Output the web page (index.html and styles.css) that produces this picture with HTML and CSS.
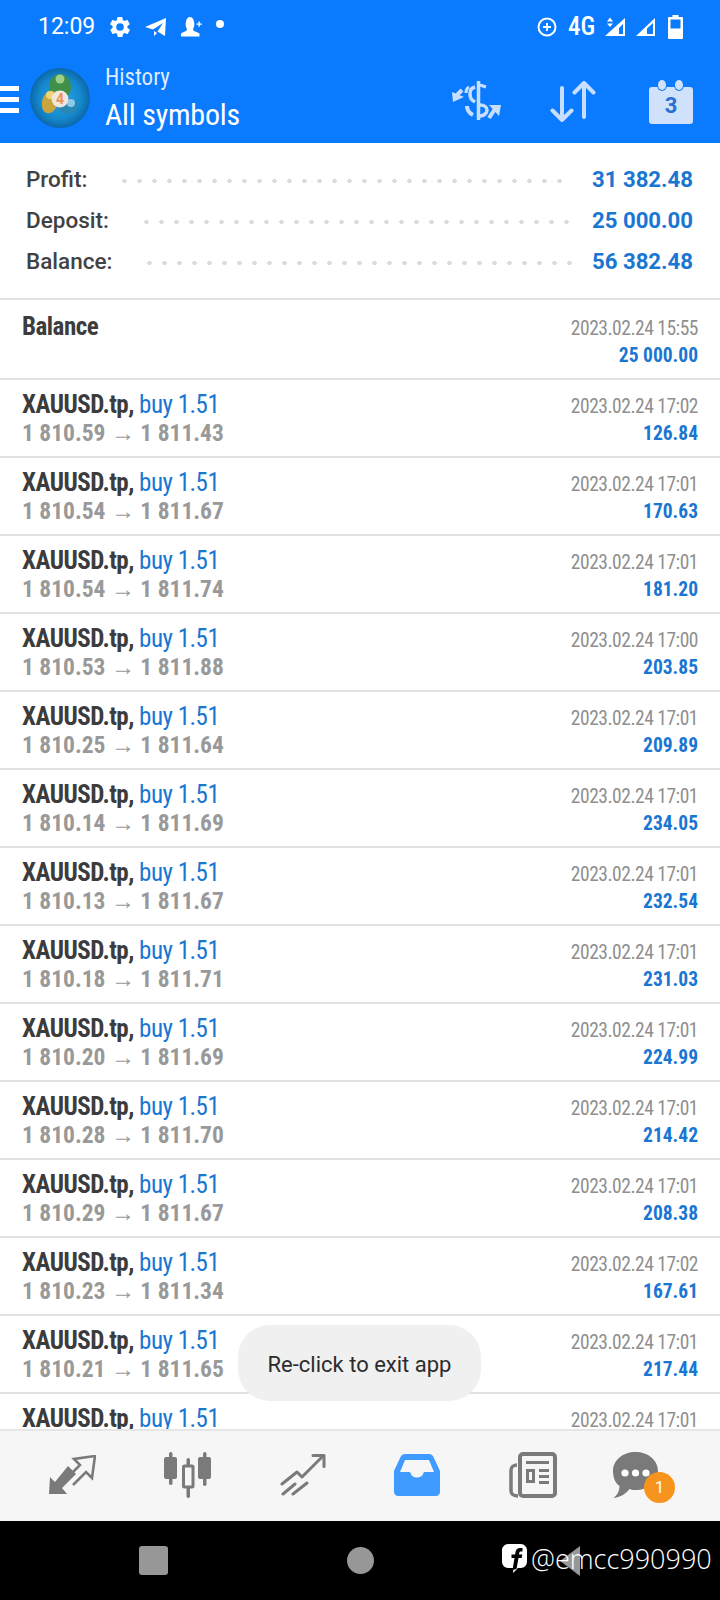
FILE: index.html
```html
<!DOCTYPE html>
<html lang="en">
<head>
    <meta charset="UTF-8">
    <meta name="viewport" content="width=device-width, initial-scale=1.0">
    <title>History</title>
    <link rel="stylesheet" href="styles.css">
</head>
<body>
    <div class="screen">
        <!-- Blue header with Android status bar -->
        <header class="header">
            <div class="status">
                <div class="status-left">
                    <span class="clock">12:09</span>
                    <svg class="st-gear" width="24" height="24" viewBox="0 0 24 24"><path fill="#fff" d="M19.4 13c.1-.3.1-.7.1-1s0-.7-.1-1l2.1-1.600c.2-.2.2-.4.1-.6l-2-3.500c-.1-.2-.4-.3-.6-.2l-2.500 1c-.5-.4-1.100-.7-1.700-1l-.4-2.700c0-.2-.2-.4-.5-.4h-4c-.2 0-.4.2-.5.400l-.4 2.700c-.6.2-1.100.6-1.700 1l-2.500-1c-.2-.1-.5 0-.6.2l-2 3.500c-.1.2-.1.5.1.6L4.600 11c0 .3-.1.7-.1 1s0 .7.1 1l-2.100 1.600c-.2.2-.2.4-.1.6l2 3.500c.1.2.4.3.6.2l2.500-1c.5.4 1.100.7 1.700 1l.4 2.700c0 .2.200.4.500.4h4c.2 0 .4-.2.500-.4l.4-2.700c.6-.2 1.100-.6 1.700-1l2.500 1c.2.1.5 0 .6-.2l2-3.500c.1-.2.1-.5-.1-.6zM12 15.800a3.800 3.800 0 1 1 0-7.600 3.800 3.800 0 0 1 0 7.600z"/></svg>
                    <svg class="st-plane" width="22" height="20" viewBox="0 0 22 20"><path fill="#fff" d="M0 10 21 1 20 19 12.500 14.500 18 6 8 12.500z"/><path fill="#fff" d="M9 14l3 2-3 3z"/></svg>
                    <svg class="st-person" width="21" height="21" viewBox="0 0 21 21"><path fill="#fff" d="M0 20.500v-2.500c0-1.500 4-2 5.500-3.500.5-.5.5-1.500 0-2.500C4.500 10.500 4.500 7.500 5 5.500 5.500 2.500 7 1 9 1s3.500 1.500 4 4.500c.5 2 .5 5-.5 6.500-.5 1-.5 2 0 2.500 1.500 1.500 6 2 6 3.500v2.500z"/><path fill="#fff" d="M15.500 7.500h2v-2h1.300v2h2v1.300h-2v2h-1.300v-2h-2z"/></svg>
                    <span class="st-dot"></span>
                </div>
                <div class="status-right">
                    <svg width="20" height="20" viewBox="0 0 20 20" fill="none" stroke="#fff"><circle cx="10" cy="10" r="8.500" stroke-width="2"/><path stroke-width="1.800" d="M6 10h8M10 6v8"/></svg>
                    <span class="net">4G</span>
                    <svg class="sig-a" width="22" height="19" viewBox="0 0 22 19"><path fill="#fff" d="M3 4.500 6 .5l3 4zM3 6.500h6l-3 3.500z"/><path fill="#fff" d="M1 19 21 1v18z"/><path fill="#0a7bff" d="M19 7 15 11v6h4z"/></svg>
                    <svg class="sig-b" width="19" height="19" viewBox="0 0 19 19"><path fill="#fff" d="M0 19 19 1v18z"/><path fill="#0a7bff" d="M17 6 11 11.500V17h6z"/><path fill="#fff" d="M5 17l6-5.500V17z"/></svg>
                    <svg class="batt" width="15" height="24" viewBox="0 0 15 24"><path fill="#fff" d="M4.500 0h6v2h3.500c.5 0 1 .5 1 1v20c0 .5-.5 1-1 1H1c-.5 0-1-.5-1-1V3c0-.5.5-1 1-1h3.500z"/><path fill="#0a7bff" d="M2.500 4.500h10v9h-10z"/></svg>
                </div>
            </div>
            <div class="toolbar">
                <div class="burger"><span></span><span></span><span></span></div>
                <svg class="logo" width="60" height="60" viewBox="0 0 60 60">
                    <defs>
                        <radialGradient id="logoBg" cx="50%" cy="50%" r="50%"><stop offset="0" stop-color="#2ba6e6"/><stop offset=".7" stop-color="#1488cc"/><stop offset="1" stop-color="#0c67a8"/></radialGradient>
                    </defs>
                    <circle cx="30" cy="30" r="30" fill="url(#logoBg)"/>
                    <ellipse cx="30" cy="19" rx="11" ry="13" fill="#3f8f4a"/>
                    <circle cx="30" cy="11" r="4.500" fill="#9ccf8a"/>
                    <ellipse cx="20" cy="34" rx="8" ry="11.500" transform="rotate(15 20 34)" fill="#c9a53f"/>
                    <circle cx="20" cy="27" r="4" fill="#f0d574"/>
                    <ellipse cx="38" cy="38" rx="10" ry="8" fill="#2a86b5"/>
                    <circle cx="41" cy="35" r="4" fill="#8ecbe6"/>
                    <circle cx="30" cy="31" r="8.500" fill="#f0e6dc"/>
                    <text class="logo-num" x="30" y="36">4</text>
                </svg>
                <div class="titles">
                    <div class="subtitle">History</div>
                    <div class="title">All symbols</div>
                </div>
                <div class="actions">
                    <svg class="act-money" width="50" height="40" viewBox="0 0 50 40" fill="none" stroke="#c8deff">
                        <path stroke-width="3.500" d="M26.500 0v39"/>
                        <path stroke-width="3" d="M28 4l6 2"/>
                        <path stroke-width="3.500" d="M23 6c-3 1-5 2-5 7s2 6 5 8"/>
                        <path stroke-width="3.500" d="M28 24c4 0 7 2 7 5s-3 6-7 6"/>
                        <path stroke-width="4" d="M15 25c0 4 2 7 6 9"/>
                        <path stroke-width="3" d="M17 6c-2 1-3 3-3 6"/>
                        <path fill="#c8deff" stroke="none" d="M0 11 12 16 1 21z"/>
                        <path stroke-width="4" d="M4 15 10 9"/>
                        <path fill="#c8deff" stroke="none" d="M37 24H49L47 35z"/>
                        <path stroke-width="4" d="M37 37 43 28"/>
                    </svg>
                    <svg class="act-sort" width="47" height="41" viewBox="0 0 47 41" fill="none" stroke="#c8deff" stroke-width="4" stroke-linecap="round" stroke-linejoin="round">
                        <path d="M12 7v32M2.500 29.500 12 39l9.500-9.500"/>
                        <path d="M34 36V2M24.500 11.500 34 2l9.500 9.500"/>
                    </svg>
                    <div class="cal">
                        <span class="cal-ring"></span>
                        <span class="cal-ring cal-ring2"></span>
                        <span class="cal-day">3</span>
                    </div>
                </div>
            </div>
        </header>

        <!-- Totals -->
        <section class="summary">
            <div class="sum-row"><span class="sum-label">Profit:</span><span class="leader"></span><span class="sum-val">31 382.48</span></div>
            <div class="sum-row"><span class="sum-label">Deposit:</span><span class="leader"></span><span class="sum-val">25 000.00</span></div>
            <div class="sum-row"><span class="sum-label">Balance:</span><span class="leader"></span><span class="sum-val">56 382.48</span></div>
        </section>

        <!-- Deals -->
        <main class="list">
            <div class="row row-balance">
                <div class="left"><div class="sym cond">Balance</div></div>
                <div class="right"><div class="date cond">2023.02.24 15:55</div><div class="amount cond">25 000.00</div></div>
            </div>
            <div class="row">
                <div class="left"><div class="cond"><span class="sym">XAUUSD.tp,</span> <span class="buy">buy 1.51</span></div><div class="price cond">1 810.59 <span class="arrow">→</span> 1 811.43</div></div>
                <div class="right"><div class="date cond">2023.02.24 17:02</div><div class="amount cond">126.84</div></div>
            </div>
            <div class="row">
                <div class="left"><div class="cond"><span class="sym">XAUUSD.tp,</span> <span class="buy">buy 1.51</span></div><div class="price cond">1 810.54 <span class="arrow">→</span> 1 811.67</div></div>
                <div class="right"><div class="date cond">2023.02.24 17:01</div><div class="amount cond">170.63</div></div>
            </div>
            <div class="row">
                <div class="left"><div class="cond"><span class="sym">XAUUSD.tp,</span> <span class="buy">buy 1.51</span></div><div class="price cond">1 810.54 <span class="arrow">→</span> 1 811.74</div></div>
                <div class="right"><div class="date cond">2023.02.24 17:01</div><div class="amount cond">181.20</div></div>
            </div>
            <div class="row">
                <div class="left"><div class="cond"><span class="sym">XAUUSD.tp,</span> <span class="buy">buy 1.51</span></div><div class="price cond">1 810.53 <span class="arrow">→</span> 1 811.88</div></div>
                <div class="right"><div class="date cond">2023.02.24 17:00</div><div class="amount cond">203.85</div></div>
            </div>
            <div class="row">
                <div class="left"><div class="cond"><span class="sym">XAUUSD.tp,</span> <span class="buy">buy 1.51</span></div><div class="price cond">1 810.25 <span class="arrow">→</span> 1 811.64</div></div>
                <div class="right"><div class="date cond">2023.02.24 17:01</div><div class="amount cond">209.89</div></div>
            </div>
            <div class="row">
                <div class="left"><div class="cond"><span class="sym">XAUUSD.tp,</span> <span class="buy">buy 1.51</span></div><div class="price cond">1 810.14 <span class="arrow">→</span> 1 811.69</div></div>
                <div class="right"><div class="date cond">2023.02.24 17:01</div><div class="amount cond">234.05</div></div>
            </div>
            <div class="row">
                <div class="left"><div class="cond"><span class="sym">XAUUSD.tp,</span> <span class="buy">buy 1.51</span></div><div class="price cond">1 810.13 <span class="arrow">→</span> 1 811.67</div></div>
                <div class="right"><div class="date cond">2023.02.24 17:01</div><div class="amount cond">232.54</div></div>
            </div>
            <div class="row">
                <div class="left"><div class="cond"><span class="sym">XAUUSD.tp,</span> <span class="buy">buy 1.51</span></div><div class="price cond">1 810.18 <span class="arrow">→</span> 1 811.71</div></div>
                <div class="right"><div class="date cond">2023.02.24 17:01</div><div class="amount cond">231.03</div></div>
            </div>
            <div class="row">
                <div class="left"><div class="cond"><span class="sym">XAUUSD.tp,</span> <span class="buy">buy 1.51</span></div><div class="price cond">1 810.20 <span class="arrow">→</span> 1 811.69</div></div>
                <div class="right"><div class="date cond">2023.02.24 17:01</div><div class="amount cond">224.99</div></div>
            </div>
            <div class="row">
                <div class="left"><div class="cond"><span class="sym">XAUUSD.tp,</span> <span class="buy">buy 1.51</span></div><div class="price cond">1 810.28 <span class="arrow">→</span> 1 811.70</div></div>
                <div class="right"><div class="date cond">2023.02.24 17:01</div><div class="amount cond">214.42</div></div>
            </div>
            <div class="row">
                <div class="left"><div class="cond"><span class="sym">XAUUSD.tp,</span> <span class="buy">buy 1.51</span></div><div class="price cond">1 810.29 <span class="arrow">→</span> 1 811.67</div></div>
                <div class="right"><div class="date cond">2023.02.24 17:01</div><div class="amount cond">208.38</div></div>
            </div>
            <div class="row">
                <div class="left"><div class="cond"><span class="sym">XAUUSD.tp,</span> <span class="buy">buy 1.51</span></div><div class="price cond">1 810.23 <span class="arrow">→</span> 1 811.34</div></div>
                <div class="right"><div class="date cond">2023.02.24 17:02</div><div class="amount cond">167.61</div></div>
            </div>
            <div class="row">
                <div class="left"><div class="cond"><span class="sym">XAUUSD.tp,</span> <span class="buy">buy 1.51</span></div><div class="price cond">1 810.21 <span class="arrow">→</span> 1 811.65</div></div>
                <div class="right"><div class="date cond">2023.02.24 17:01</div><div class="amount cond">217.44</div></div>
            </div>
            <div class="row">
                <div class="left"><div class="cond"><span class="sym">XAUUSD.tp,</span> <span class="buy">buy 1.51</span></div></div>
                <div class="right"><div class="date cond">2023.02.24 17:01</div></div>
            </div>
        </main>

        <!-- Toast sits over the list -->
        <div class="toast">Re-click to exit app</div>

        <!-- Tab bar -->
        <nav class="tabs">
            <svg class="tab" width="47" height="40" viewBox="0 0 47 40">
                <path fill="#7a7a7a" d="M0 39 1 22 6 27 19 11 27 19 13 33 18 39z"/>
                <path fill="none" stroke="#7a7a7a" stroke-width="2.600" d="M20 21 31 10 25 4 46 1 43 23 37 17 24 30"/>
            </svg>
            <svg class="tab" width="48" height="46" viewBox="0 0 48 46" fill="#7a7a7a">
                <rect x="5" y="0" width="3.500" height="33" rx="1.700"/>
                <rect x="39" y="0" width="3.500" height="34" rx="1.700"/>
                <rect x="22.500" y="6" width="3.500" height="40" rx="1.700"/>
                <rect x="0" y="5" width="13" height="22" rx="2"/>
                <rect x="34" y="5" width="13" height="22" rx="2"/>
                <rect x="19.500" y="14" width="9.500" height="21" rx="1" fill="#f6f6f6" stroke="#7a7a7a" stroke-width="3"/>
            </svg>
            <svg class="tab" width="46" height="42" viewBox="0 0 46 42" fill="none" stroke="#7a7a7a" stroke-width="3" stroke-linejoin="round" stroke-linecap="round">
                <path d="M2 30 17 18l5 5L43 2"/><path d="M33 1.500h11v11"/>
                <path d="M3 40 15 30M13 40 27 29"/>
            </svg>
            <svg class="tab" width="46" height="42" viewBox="0 0 46 42">
                <path fill="#3f9bff" d="M11 0h24c2 0 3.500 1 4.500 3L46 17v21c0 2-2 4-4 4H4c-2 0-4-2-4-4V17L6.500 3C7.500 1 9 0 11 0z"/>
                <path fill="#f6f6f6" d="M11 6h24l5 12H31c-1 0-1.500.5-2 2-.5 2-3.500 3.500-6 3.500s-5.500-1.500-6-3.500c-.5-1.500-1-2-2-2H6z"/>
            </svg>
            <svg class="tab tab-news" width="48" height="46" viewBox="0 0 48 46">
                <rect x="11" y="2" width="35" height="42" rx="3" fill="none" stroke="#7a7a7a" stroke-width="4"/>
                <path fill="none" stroke="#7a7a7a" stroke-width="3.500" d="M9 44c-4 0-7-2-7-5V18c0-3 3-5 6-5"/>
                <path fill="#7a7a7a" d="M17 9h23v3H17zM17 17h9v14h-9zM30 17h10v3H30zM30 23h10v3H30zM30 29h10v3H30z"/>
                <path fill="#f6f6f6" d="M20 20h3v8h-3z"/>
            </svg>
            <div class="chat">
                <svg width="45" height="46" viewBox="0 0 45 46">
                    <path fill="#7a7a7a" d="M22.500 0C35 0 45 8 45 19S35 38 22.500 38c-2 0-4 0-6-1-3 4-8 8-16 9 4-3 6-7 6-12C2 31 0 25 0 19 0 8 10 0 22.500 0z"/>
                    <circle cx="12" cy="21" r="3.600" fill="#fff"/><circle cx="22.500" cy="21" r="3.600" fill="#fff"/><circle cx="33" cy="21" r="3.600" fill="#fff"/>
                </svg>
                <span class="badge">1</span>
            </div>
        </nav>

        <!-- Android nav bar -->
        <footer class="navbar">
            <span class="nav-square"></span>
            <span class="nav-circle"></span>
            <div class="nav-back"></div>
            <div class="watermark">
                <svg width="25" height="29" viewBox="0 0 25 29"><path fill="#fff" d="M6 0h13c3 0 6 3 6 6v12c0 3-3 6-6 6h-3l-5 5 .5-5H6c-3 0-6-3-6-6V6c0-3 3-6 6-6z"/><path fill="#000" d="M10.500 26 12.500 14H9.500v-3.500h3.600l.4-2.500C14 5.500 15.500 4 18 4h2.500v3.500H19c-1 0-1.500.5-1.700 1.200l-.3 1.800h3.300L19.700 14h-3.200l-2 11z"/></svg>
                <span class="wm-text">@emcc990990</span>
            </div>
        </footer>
    </div>
</body>
</html>
```

FILE: styles.css
```css
* {
    box-sizing: border-box;
}
body {
    margin: 0;
    font-family: Roboto, "Liberation Sans", sans-serif;
    background-color: #fff;
}
svg {
    display: block;
}
.screen {
    position: relative;
    width: 720px;
    height: 1600px;
    display: flex;
    flex-direction: column;
    overflow: hidden;
}
.cond {
    font-stretch: 75%;
}

/* header */
.header {
    height: 143px;
    flex-shrink: 0;
    background-color: #0a7bff;
    color: white;
}
.status {
    height: 53px;
    padding: 0 37px 0 38px;
    display: flex;
    justify-content: space-between;
    align-items: center;
}
.status-left, .status-right {
    display: flex;
    align-items: center;
}
.clock {
    font-size: 23px;
    margin-right: 15px;
}
.st-gear {
    margin-left: -2px;
}
.st-plane {
    margin-left: 13px;
}
.st-person {
    margin-left: 14px;
}
.st-dot {
    width: 8px;
    height: 8px;
    margin: -6px 0 0 14px;
    border-radius: 50%;
    background-color: white;
}
.net {
    width: 27px;
    margin-left: 11px;
    font-size: 25px;
    font-weight: 500;
    font-stretch: 75%;
}
.sig-a {
    margin-left: 9px;
}
.sig-b {
    margin-left: 10px;
}
.batt {
    margin-left: 13px;
}
.toolbar {
    height: 90px;
    display: flex;
    align-items: center;
}
.burger {
    width: 19px;
    margin: 3px 11px 0 0;
    display: flex;
    flex-direction: column;
    gap: 6px;
}
.burger span {
    height: 5px;
    background-color: white;
}
.logo-num {
    font-size: 14px;
    font-weight: 700;
    fill: #e8925c;
    text-anchor: middle;
}
.titles {
    margin: 6px 0 0 15px;
    flex: 1;
}
.subtitle {
    font-size: 23px;
    font-stretch: 75%;
    color: #dcebff;
    line-height: 28px;
}
.title {
    font-size: 30px;
    font-stretch: 75%;
    letter-spacing: -0.2px;
    line-height: 46px;
}
.actions {
    display: flex;
    align-items: center;
    padding: 6px 27px 0 0;
}
.act-sort {
    margin-left: 48px;
}
.cal {
    position: relative;
    width: 44px;
    height: 37px;
    margin: 9px 0 0 52px;
    background-color: #cfe1fb;
    border-radius: 3px;
    text-align: center;
}
.cal-ring {
    position: absolute;
    top: -7px;
    left: 9px;
    width: 8px;
    height: 10px;
    border-radius: 50%;
    background-color: #cfe1fb;
    box-shadow: 0 0 0 1px #0a7bff;
}
.cal-ring2 {
    left: 26px;
}
.cal-day {
    font-size: 22px;
    font-weight: 700;
    line-height: 38px;
    color: #2a6fd0;
}

/* summary */
.summary {
    height: 157px;
    flex-shrink: 0;
    padding: 15px 27px 0 26px;
    border-bottom: 2px solid #e0e0e0;
}
.sum-row {
    height: 41px;
    display: flex;
    align-items: center;
}
.sum-label {
    font-size: 22.500px;
    font-weight: 500;
    color: #424242;
}
.leader {
    flex: 1;
    height: 4px;
    margin: 5px 20px 0 30px;
    background-image: radial-gradient(circle, #dcdcdc 2px, transparent 2.500px);
    background-size: 15px 4px;
    background-position: left;
}
.sum-val {
    font-size: 22.200px;
    font-weight: 700;
    color: #1976d2;
}

/* deals */
.list {
    flex: 1;
    min-height: 0;
    overflow: hidden;
}
.row {
    height: 78px;
    padding: 11px 22px 0 22px;
    display: flex;
    justify-content: space-between;
    border-bottom: 2px solid #e0e0e0;
}
.row-balance {
    height: 80px;
}
.row-balance .left {
    padding-top: 2px;
}
.row-balance .right {
    padding-top: 5px;
}
.left {
    line-height: 28px;
    font-size: 25px;
    letter-spacing: -0.500px;
}
.right {
    padding-top: 3px;
    text-align: right;
}
.sym {
    font-weight: 700;
    color: #3c3c3c;
}
.buy {
    color: #1976d2;
}
.price {
    font-size: 23.500px;
    letter-spacing: 0;
    font-weight: 700;
    color: #999;
}
.arrow {
    font-weight: 400;
    font-size: 24px;
}
.date {
    font-size: 19.500px;
    letter-spacing: -0.480px;
    line-height: 26px;
    color: #8f8f8f;
}
.amount {
    font-size: 19.500px;
    font-weight: 700;
    line-height: 28px;
    color: #1976d2;
}

/* toast */
.toast {
    position: absolute;
    left: 238px;
    top: 1325px;
    width: 243px;
    height: 76px;
    border-radius: 32px;
    background-color: #f0f0f0;
    color: #2c2c2c;
    font-size: 22px;
    line-height: 80px;
    text-align: center;
}

/* tabs */
.tabs {
    height: 92px;
    flex-shrink: 0;
    background-color: #f6f6f6;
    border-top: 2px solid #e6e6e6;
    padding: 0 0 3px 49px;
    display: flex;
    gap: 68px;
    align-items: center;
}
.tab-news {
    margin-left: 1px;
}
.chat {
    position: relative;
    margin-left: -12px;
}
.badge {
    position: absolute;
    right: -17px;
    bottom: -5px;
    width: 31px;
    height: 31px;
    border-radius: 50%;
    background-color: #f7941d;
    color: #fff;
    font-size: 17px;
    line-height: 31px;
    text-align: center;
}

/* android nav */
.navbar {
    position: relative;
    height: 79px;
    flex-shrink: 0;
    background-color: black;
    display: flex;
    align-items: center;
}
.nav-square {
    width: 29px;
    height: 29px;
    margin-left: 139px;
    border-radius: 3px;
    background-color: #979797;
}
.nav-circle {
    width: 27px;
    height: 27px;
    margin-left: 179px;
    border-radius: 50%;
    background-color: #979797;
}
.nav-back {
    width: 0;
    height: 0;
    margin-left: 186px;
    border-top: 15px solid transparent;
    border-bottom: 15px solid transparent;
    border-right: 20px solid #979797;
}
.watermark {
    position: absolute;
    left: 502px;
    top: 23px;
    display: flex;
    align-items: center;
    gap: 4px;
    color: white;
}
.wm-text {
    font-family: "Open Sans", sans-serif;
    font-size: 27px;
    font-weight: 300;
    line-height: 24px;
}
```
